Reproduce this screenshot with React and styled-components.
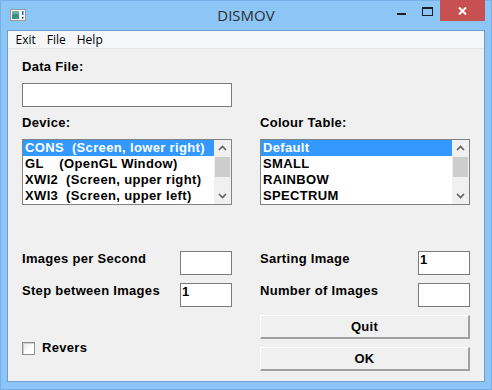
import React from "react";
import styled, { createGlobalStyle } from "styled-components";

const Global = createGlobalStyle`
  html, body { margin: 0; padding: 0; background: #8bc6f7; }
  * { box-sizing: border-box; }
`;

const Frame = styled.div`
  width: 492px;
  height: 390px;
  background: #8bc6f7;
  border: 1px solid #77b0e6;
  padding: 0 6px 7px 6px;
  display: flex;
  flex-direction: column;
`;

const TitleBar = styled.div`
  height: 30px;
  margin-top: -1px;
  display: grid;
  grid-template-columns: 1fr auto 1fr;
  align-items: start;
`;

const AppIcon = styled.svg`
  margin: 9px 0 0 3px;
  display: block;
`;

const Title = styled.div`
  font-family: "Open Sans", "Noto Sans", sans-serif;
  font-size: 15px;
  line-height: 20px;
  padding-top: 5px;
  color: #2d2d2d;
`;

const Caption = styled.div`
  display: flex;
  justify-content: flex-end;
  align-items: flex-start;
`;

const CapButton = styled.div`
  width: ${(p) => (p.$close ? 45 : 26)}px;
  height: 21px;
  background: ${(p) => (p.$close ? "#c75050" : "transparent")};
  display: flex;
  align-items: center;
  justify-content: center;
`;

const Client = styled.div`
  flex: 1;
  border: 1px solid #6f9fd1;
  background: #f0f0f0;
  display: flex;
  flex-direction: column;
`;

const MenuBar = styled.div`
  height: 18px;
  background: #f5f6f7;
  border-bottom: 1px solid #e6e7e8;
  display: flex;
  align-items: center;
  padding-left: 2px;
  font-family: "Open Sans", "Noto Sans", sans-serif;
  font-size: 12px;
  color: #000;
`;

const MenuItem = styled.span`
  padding: 0 5.5px;
  line-height: 18px;
`;

const Body = styled.div`
  padding: 10px 14px 0 14px;
  font-family: "Liberation Sans", Arial, sans-serif;
  font-weight: bold;
  font-size: 13px;
  letter-spacing: 0.3px;
  color: #000;
`;

const Columns = styled.div`
  display: grid;
  grid-template-columns: 210px 210px;
  column-gap: 28px;
  margin-top: ${(p) => p.$top || 0}px;
`;

const Stack = styled.div`
  display: flex;
  flex-direction: column;
  gap: ${(p) => p.$gap || 0}px;
`;

const Label = styled.div`
  line-height: 16px;
  height: 16px;
  white-space: nowrap;
`;

const Edit = styled.div`
  width: ${(p) => p.$w || 52}px;
  height: 24px;
  background: #fff;
  border: 1px solid #7a7a7a;
  padding: 0 1px;
  line-height: 16px;
`;

const ListBox = styled.div`
  height: 66px;
  border: 1px solid #828282;
  background: #fff;
  display: flex;
`;

const ListItems = styled.div`
  flex: 1;
  overflow: hidden;
`;

const ListItem = styled.div`
  height: 16px;
  line-height: 16px;
  padding-left: 2px;
  white-space: pre;
  letter-spacing: 0.35px;
  background: ${(p) => (p.$sel ? "#3399ff" : "transparent")};
  color: ${(p) => (p.$sel ? "#fff" : "#000")};
`;

const ScrollBar = styled.div`
  width: 17px;
  background: #f0f0f0;
  display: flex;
  flex-direction: column;
  align-items: center;
`;

const ScrollArrow = styled.div`
  height: 16px;
  width: 17px;
  display: flex;
  align-items: center;
  justify-content: center;
`;

const Thumb = styled.div`
  width: 15px;
  height: 20px;
  margin-top: 1px;
  background: #cdcdcd;
`;

const Track = styled.div`
  flex: 1;
`;

const FieldRow = styled.div`
  display: flex;
  justify-content: space-between;
  align-items: flex-start;
`;

const Button = styled.div`
  height: 24px;
  background: #f0f0f0;
  border-top: 1px solid #fff;
  border-left: 1px solid #fff;
  border-right: 2px solid #a0a0a0;
  border-bottom: 2px solid #a0a0a0;
  display: flex;
  align-items: center;
  justify-content: center;
  line-height: 16px;
`;

const CheckRow = styled.div`
  display: flex;
  align-items: center;
  gap: 7px;
  height: 16px;
  margin-top: 25px;
`;

const CheckBox = styled.div`
  width: 13px;
  height: 13px;
  border: 1px solid #8f8f8f;
  background: linear-gradient(135deg, #e6e6e6 0%, #fff 60%);
  box-shadow: inset 1px 1px 0 #d0d0d0;
`;

const Up = () => (
  <svg width="9" height="6" viewBox="0 0 9 6">
    <polyline points="1,5 4.5,1.5 8,5" fill="none" stroke="#606060" strokeWidth="1.6" />
  </svg>
);
const Down = () => (
  <svg width="9" height="6" viewBox="0 0 9 6">
    <polyline points="1,1 4.5,4.5 8,1" fill="none" stroke="#606060" strokeWidth="1.6" />
  </svg>
);

function List({ items }) {
  return (
    <ListBox>
      <ListItems>
        {items.map((t, i) => (
          <ListItem key={i} $sel={i === 0}>
            {t}
          </ListItem>
        ))}
      </ListItems>
      <ScrollBar>
        <ScrollArrow>
          <Up />
        </ScrollArrow>
        <Thumb />
        <Track />
        <ScrollArrow>
          <Down />
        </ScrollArrow>
      </ScrollBar>
    </ListBox>
  );
}

export default function App() {
  return (
    <>
      <Global />
      <Frame>
        <TitleBar>
          <AppIcon width="16" height="12" viewBox="0 0 16 12">
            <rect x="0.5" y="0.5" width="15" height="11" fill="#f4f4f4" stroke="#9a9a9a" />
            <rect x="2" y="2" width="7" height="8" fill="#3f8f86" />
            <rect x="2" y="2" width="7" height="3" fill="#6fb0a4" />
            <rect x="12" y="2" width="1.5" height="4" fill="#2a6fc9" />
            <rect x="12" y="8" width="1.5" height="1.5" fill="#333" />
          </AppIcon>
          <Title>DISMOV</Title>
          <Caption>
            <CapButton>
              <svg width="9" height="2" viewBox="0 0 9 2" style={{ marginTop: 6 }}>
                <rect width="9" height="2" fill="#1e1e1e" />
              </svg>
            </CapButton>
            <CapButton>
              <svg width="11" height="9" viewBox="0 0 11 9" style={{ marginTop: 1 }}>
                <rect x="0.5" y="0.5" width="10" height="8" fill="none" stroke="#1e1e1e" />
                <rect x="0" y="0" width="11" height="2" fill="#1e1e1e" />
              </svg>
            </CapButton>
            <CapButton $close>
              <svg width="9" height="8" viewBox="0 0 9 8">
                <path d="M1 0.5 L8 7.5 M8 0.5 L1 7.5" stroke="#fff" strokeWidth="2" />
              </svg>
            </CapButton>
          </Caption>
        </TitleBar>
        <Client>
          <MenuBar>
            <MenuItem>Exit</MenuItem>
            <MenuItem>File</MenuItem>
            <MenuItem>Help</MenuItem>
          </MenuBar>
          <Body>
            <Columns>
              <Stack $gap={8}>
                <Label>Data File:</Label>
                <Edit $w={210} />
              </Stack>
            </Columns>
            <Columns $top={8}>
              <Stack $gap={8}>
                <Label>Device:</Label>
                <List
                  items={[
                    "CONS  (Screen, lower right)",
                    "GL    (OpenGL Window)",
                    "XWI2  (Screen, upper right)",
                    "XWI3  (Screen, upper left)",
                  ]}
                />
              </Stack>
              <Stack $gap={8}>
                <Label>Colour Table:</Label>
                <List items={["Default", "SMALL", "RAINBOW", "SPECTRUM"]} />
              </Stack>
            </Columns>
            <Columns $top={46}>
              <Stack $gap={8}>
                <FieldRow>
                  <Label>Images per Second</Label>
                  <Edit />
                </FieldRow>
                <FieldRow>
                  <Label>Step between Images</Label>
                  <Edit>1</Edit>
                </FieldRow>
                <CheckRow>
                  <CheckBox />
                  <Label>Revers</Label>
                </CheckRow>
              </Stack>
              <Stack $gap={8}>
                <FieldRow>
                  <Label>Sarting Image</Label>
                  <Edit>1</Edit>
                </FieldRow>
                <FieldRow>
                  <Label>Number of Images</Label>
                  <Edit />
                </FieldRow>
                <Button>Quit</Button>
                <Button>OK</Button>
              </Stack>
            </Columns>
          </Body>
        </Client>
      </Frame>
    </>
  );
}
